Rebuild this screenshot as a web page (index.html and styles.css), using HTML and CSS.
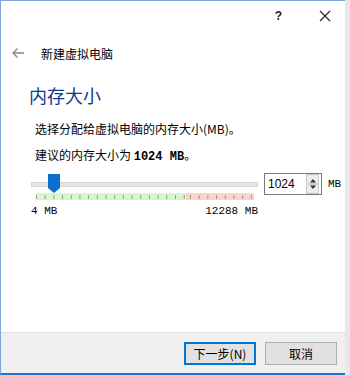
FILE: index.html
```html
<!DOCTYPE html>
<html lang="zh-CN">
<head>
    <meta charset="UTF-8">
    <title>新建虚拟电脑</title>
    <link rel="stylesheet" href="styles.css">
</head>
<body>
    <div class="window">
        <div class="titlebar">
            <span class="help">?</span>
            <span class="close">
                <svg width="12" height="12" viewBox="0 0 12 12"><path d="M1 1L11 11M11 1L1 11" stroke="#222" stroke-width="1.1"/></svg>
            </span>
        </div>
        <div class="header">
            <svg class="back" width="12" height="10" viewBox="0 0 12 10"><path d="M5.5 0.5L1 5L5.5 9.5M1 5H12" fill="none" stroke="#888" stroke-width="1.4"/></svg>
            <span>新建虚拟电脑</span>
        </div>
        <div class="content">
            <h1>内存大小</h1>
            <p class="line1">选择分配给虚拟电脑的内存大小(MB)。</p>
            <p class="line2">建议的内存大小为 <b class="mono">1024 MB</b>。</p>
            <div class="slider-row">
                <div class="slider">
                    <div class="track"></div>
                    <div class="thumb">
                        <svg width="12" height="19" viewBox="0 0 12 19"><path d="M0 0H12V14L6 19L0 14Z" fill="#0a6fd0"/></svg>
                    </div>
                    <div class="ticks">
                        <div class="green"></div>
                        <div class="red"></div>
                    </div>
                    <div class="labels">
                        <span>4 MB</span>
                        <span>12288 MB</span>
                    </div>
                </div>
                <div class="spin">
                    <span class="value">1024</span>
                    <span class="arrows">
                        <svg width="10" height="16" viewBox="0 0 10 16"><path d="M5 3L8 6.5H2Z M5 13L8 9.5H2Z" fill="#333"/><path d="M0.5 8H9.5" stroke="#aaa"/></svg>
                    </span>
                </div>
                <span class="unit mono">MB</span>
            </div>
        </div>
        <div class="footer">
            <button class="primary">下一步(N)</button>
            <button>取消</button>
        </div>
    </div>
</body>
</html>
```

FILE: styles.css
```css
body {
    margin: 0;
    padding: 0;
    background-color: #e8e8e8;
    font-family: "Noto Sans CJK SC", "Liberation Sans", sans-serif;
    font-size: 12px;
    color: #000;
}
.window {
    width: 344px;
    height: 372px;
    background: #fff;
    border-left: 1px solid #7fa6d6;
    border-top: 1px solid #7fa6d6;
    border-bottom: 2px solid #1c78c9;
    display: flex;
    flex-direction: column;
}
.titlebar {
    height: 30px;
    display: flex;
    align-items: center;
    justify-content: flex-end;
}
.help {
    font-family: "Liberation Sans", sans-serif;
    font-size: 12px;
    font-weight: bold;
    color: #222;
    margin-right: 37px;
}
.close {
    display: flex;
    margin-right: 14px;
}
.header {
    height: 44px;
    display: flex;
    align-items: center;
    padding-left: 11px;
}
.header .back {
    margin-right: 17px;
}
.content {
    flex: 1;
    padding-left: 28px;
}
h1 {
    margin: 8px 0 0;
    font-weight: normal;
    font-size: 18px;
    color: #0c3b8c;
    line-height: 24px;
}
.line1 {
    margin: 13px 0 0 6px;
    line-height: 18px;
}
.line2 {
    margin: 8px 0 0 6px;
    line-height: 18px;
}
.mono {
    font-family: "Liberation Mono", monospace;
    font-size: 12px;
}
.slider-row {
    display: flex;
    align-items: flex-start;
    margin-top: 7px;
    padding-left: 2px;
}
.slider {
    position: relative;
    width: 227px;
    height: 46px;
}
.track {
    position: absolute;
    left: 0;
    right: 0;
    top: 9px;
    height: 3px;
    background: #e4e4e4;
    border: 1px solid #d6d6d6;
}
.thumb {
    position: absolute;
    left: 17px;
    top: 1px;
    display: flex;
}
.ticks {
    position: absolute;
    left: 5px;
    top: 20px;
    width: 218px;
    height: 7px;
    display: flex;
}
.green, .red {
    background-image: linear-gradient(to right, #8c9c8c 0 1px, transparent 1px);
    background-size: 8.7px 4px;
    background-position: 0 center;
    background-repeat: repeat-x;
}
.green {
    width: 150px;
    background-color: #d4f7cd;
}
.red {
    flex: 1;
    background-color: #fbd3cb;
    background-position: 4px center;
}
.labels {
    position: absolute;
    left: 0;
    right: 0;
    top: 32px;
    display: flex;
    justify-content: space-between;
    font-family: "Liberation Mono", monospace;
    font-size: 11px;
}
.spin {
    margin-left: 6px;
    width: 58px;
    height: 22px;
    box-sizing: border-box;
    border: 1px solid #7a7a7a;
    display: flex;
    align-items: center;
    justify-content: space-between;
    padding-left: 3px;
    font-family: "Liberation Sans", sans-serif;
    font-size: 12px;
}
.arrows {
    display: flex;
    width: 11px;
    height: 18px;
    align-items: center;
    justify-content: center;
    background: #ececec;
    border: 1px solid #c8c8c8;
    margin-right: 2px;
}
.unit {
    margin-left: 6px;
    line-height: 22px;
    font-size: 11px;
}
.footer {
    height: 40px;
    background: #f0f0f0;
    border-top: 1px solid #dfdfdf;
    display: flex;
    align-items: center;
    justify-content: flex-end;
    padding-right: 8px;
    gap: 9px;
}
button {
    width: 72px;
    height: 23px;
    font-family: "Noto Sans CJK SC", sans-serif;
    font-size: 12px;
    background: #e1e1e1;
    border: 1px solid #adadad;
    padding: 0;
}
button.primary {
    border: 2px solid #0078d7;
}
```
